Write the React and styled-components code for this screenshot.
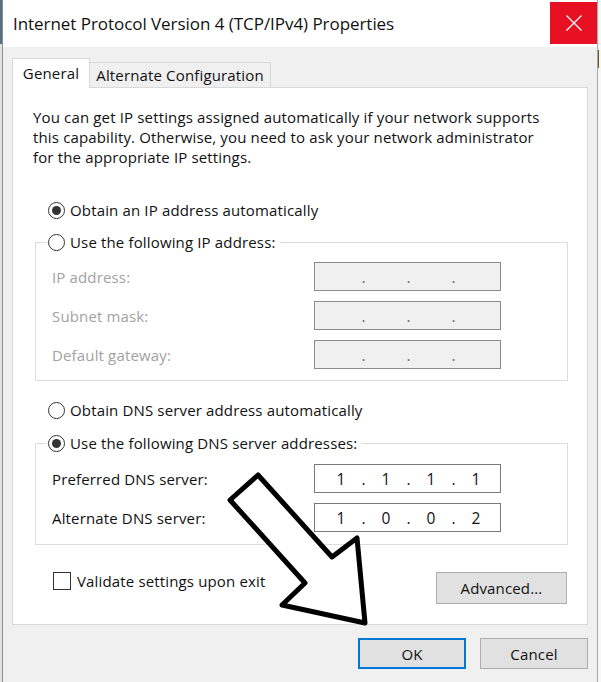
import React from "react";
import styled, { createGlobalStyle } from "styled-components";

const GlobalStyle = createGlobalStyle`
  html, body { margin: 0; padding: 0; background: #f0f0f0; }
  body { font-family: "Open Sans", "Noto Sans", "Liberation Sans", sans-serif; color: #000; }
  * { box-sizing: border-box; }
`;

const TEXT_SPACING = "0.15px";

const Screen = styled.div`
  position: relative;
  width: 601px;
  height: 682px;
  display: flex;
  overflow: hidden;
  background: #f0f0f0;
`;

const LeftEdge = styled.div`
  width: 2px;
  flex: none;
  background: linear-gradient(to bottom, #52707f 0, #52707f 44px, #e2e2e2 44px, #e2e2e2 100%);
`;

const RightEdge = styled.div`
  width: 3px;
  flex: none;
  display: flex;
  flex-direction: column;
  background: #f6f6f6;
`;

const EdgeTip = styled.div`
  margin-top: 50px;
  height: 18px;
  background: #fdf6d8;
  border-left: 1px solid #555;
`;

const Window = styled.div`
  width: 596px;
  flex: none;
  display: flex;
  flex-direction: column;
  background: #f0f0f0;
  border-left: 1px solid #8e8e8e;
  border-right: 1px solid #a8a8a8;
`;

const TitleBar = styled.div`
  height: 47px;
  flex: none;
  display: flex;
  align-items: flex-start;
  background: #fff;
`;

const Title = styled.div`
  align-self: center;
  padding-left: 10px;
  font-size: 17px;
  letter-spacing: -0.05px;
  line-height: 24px;
  color: #111;
`;

const CloseButton = styled.div`
  margin-left: auto;
  margin-top: 2px;
  width: 47px;
  height: 42px;
  background: #e81123;
  display: flex;
  align-items: center;
  justify-content: center;
`;

const Body = styled.div`
  flex: 1;
  display: flex;
  flex-direction: column;
  padding: 11px 9px 0;
`;

const TabStrip = styled.div`
  display: flex;
  align-items: flex-end;
  height: 30px;
  margin-bottom: -1px;
  position: relative;
  z-index: 1;
`;

const Tab = styled.div`
  height: ${(p) => (p.$active ? 30 : 26)}px;
  width: ${(p) => p.$w}px;
  background: ${(p) => (p.$active ? "#fff" : "#f0f0f0")};
  border-top: 1px solid #d9d9d9;
  border-right: 1px solid #d9d9d9;
  border-left: ${(p) => (p.$active ? "1px solid #d9d9d9" : "none")};
  border-bottom: ${(p) => (p.$active ? "none" : "1px solid #d9d9d9")};
  font-size: 15px;
  letter-spacing: ${TEXT_SPACING};
  display: flex;
  align-items: center;
  justify-content: center;
  padding-bottom: ${(p) => (p.$active ? 2 : 0)}px;
  color: #111;
`;

const Panel = styled.div`
  height: 538px;
  background: #fff;
  border: 1px solid #d9d9d9;
  padding: 19px 20px 0 20px;
  display: flex;
  flex-direction: column;
`;

const Description = styled.p`
  margin: 0;
  font-size: 15px;
  line-height: 20px;
  letter-spacing: ${TEXT_SPACING};
  color: #111;
  white-space: nowrap;
`;

const RadioRow = styled.label`
  display: flex;
  align-items: center;
  height: 20px;
  gap: 5px;
  margin: ${(p) => p.$top || 0}px 0 0 ${(p) => (p.$inLegend ? 0 : 15)}px;
  font-size: 15px;
  letter-spacing: ${TEXT_SPACING};
  color: #111;
`;

const RadioCircle = styled.span`
  width: 17px;
  height: 17px;
  flex: none;
  border-radius: 50%;
  border: 1px solid #333;
  background: #fff;
  display: flex;
  align-items: center;
  justify-content: center;
  &::after {
    content: "";
    width: 9px;
    height: 9px;
    border-radius: 50%;
    background: ${(p) => (p.$checked ? "#333" : "transparent")};
  }
`;

const Group = styled.fieldset`
  margin: ${(p) => p.$top}px 0 0 2px;
  width: 533px;
  min-width: 0;
  border: 1px solid #dcdcdc;
  padding: ${(p) => p.$padTop}px 0 ${(p) => p.$padBottom}px;
  display: flex;
  flex-direction: column;
  gap: 10px;
`;

const Legend = styled.legend`
  margin-left: 11px;
  padding: 0 4px 0 1px;
  height: 20px;
`;

const FieldRow = styled.div`
  display: flex;
  align-items: center;
  justify-content: space-between;
  padding: 0 66px 0 16px;
`;

const FieldLabel = styled.span`
  font-size: 15px;
  letter-spacing: ${TEXT_SPACING};
  color: ${(p) => (p.$disabled ? "#a2a2a2" : "#111")};
`;

const IpField = styled.div`
  width: 187px;
  height: 29px;
  display: flex;
  align-items: center;
  padding-left: 8px;
  border: 1px solid ${(p) => (p.$disabled ? "#8c8c8c" : "#7a7a7a")};
  background: ${(p) => (p.$disabled ? "#f0f0f0" : "#fff")};
  color: ${(p) => (p.$disabled ? "#6d6d6d" : "#111")};
  font-size: 15.5px;
`;

const Octet = styled.span`
  width: 36px;
  text-align: center;
`;

const Dot = styled.span`
  width: 9px;
  text-align: center;
`;

const BottomRow = styled.div`
  margin-top: 27px;
  display: flex;
  align-items: flex-start;
  justify-content: space-between;
`;

const CheckRow = styled.label`
  display: flex;
  align-items: center;
  gap: 6px;
  height: 18px;
  margin-left: 20px;
  font-size: 15px;
  letter-spacing: ${TEXT_SPACING};
  color: #111;
`;

const CheckBox = styled.span`
  width: 18px;
  height: 18px;
  flex: none;
  border: 1px solid #333;
  background: #fff;
`;

const Button = styled.div`
  width: ${(p) => p.$w}px;
  height: ${(p) => p.$h}px;
  display: flex;
  align-items: center;
  justify-content: center;
  background: #e1e1e1;
  border: ${(p) => (p.$default ? "2px solid #0078d7" : "1px solid #adadad")};
  font-size: 15px;
  letter-spacing: ${TEXT_SPACING};
  color: #111;
`;

const ButtonRow = styled.div`
  margin-top: 13px;
  display: flex;
  justify-content: flex-end;
  gap: 14px;
`;

const ArrowOverlay = styled.svg`
  position: absolute;
  left: 0;
  top: 0;
  pointer-events: none;
`;

function Ip({ value, disabled }) {
  const parts = value ? value.split(".") : ["", "", "", ""];
  const out = [];
  parts.forEach((p, i) => {
    out.push(<Octet key={"o" + i}>{p}</Octet>);
    if (i < 3) out.push(<Dot key={"d" + i}>.</Dot>);
  });
  return <IpField $disabled={disabled}>{out}</IpField>;
}

function Radio({ checked, children, top, inLegend }) {
  return (
    <RadioRow $top={top} $inLegend={inLegend}>
      <RadioCircle $checked={checked} />
      {children}
    </RadioRow>
  );
}

export default function App() {
  return (
    <Screen>
      <GlobalStyle />
      <LeftEdge />
      <Window>
        <TitleBar>
          <Title>Internet Protocol Version 4 (TCP/IPv4) Properties</Title>
          <CloseButton>
            <svg width="16" height="16" viewBox="0 0 16 16">
              <path d="M0.5 0.5 L15.5 15.5 M15.5 0.5 L0.5 15.5" stroke="#fff" strokeWidth="1.3" fill="none" />
            </svg>
          </CloseButton>
        </TitleBar>
        <Body>
          <TabStrip>
            <Tab $active $w={78}>General</Tab>
            <Tab $w={181}>Alternate Configuration</Tab>
          </TabStrip>
          <Panel>
            <Description>
              You can get IP settings assigned automatically if your network supports
              <br />
              this capability. Otherwise, you need to ask your network administrator
              <br />
              for the appropriate IP settings.
            </Description>
            <Radio checked top={33}>Obtain an IP address automatically</Radio>
            <Group $top={12} $padTop={10} $padBottom={11}>
              <Legend>
                <Radio inLegend>Use the following IP address:</Radio>
              </Legend>
              <FieldRow>
                <FieldLabel $disabled>IP address:</FieldLabel>
                <Ip disabled />
              </FieldRow>
              <FieldRow>
                <FieldLabel $disabled>Subnet mask:</FieldLabel>
                <Ip disabled />
              </FieldRow>
              <FieldRow>
                <FieldLabel $disabled>Default gateway:</FieldLabel>
                <Ip disabled />
              </FieldRow>
            </Group>
            <Radio top={19}>Obtain DNS server address automatically</Radio>
            <Group $top={13} $padTop={11} $padBottom={12}>
              <Legend>
                <Radio checked inLegend>Use the following DNS server addresses:</Radio>
              </Legend>
              <FieldRow>
                <FieldLabel>Preferred DNS server:</FieldLabel>
                <Ip value="1.1.1.1" />
              </FieldRow>
              <FieldRow>
                <FieldLabel>Alternate DNS server:</FieldLabel>
                <Ip value="1.0.0.2" />
              </FieldRow>
            </Group>
            <BottomRow>
              <CheckRow>
                <CheckBox />
                Validate settings upon exit
              </CheckRow>
              <Button $w={131} $h={32}>Advanced...</Button>
            </BottomRow>
          </Panel>
          <ButtonRow>
            <Button $w={108} $h={31} $default>OK</Button>
            <Button $w={108} $h={31}>Cancel</Button>
          </ButtonRow>
        </Body>
      </Window>
      <RightEdge>
        <EdgeTip />
      </RightEdge>
      <ArrowOverlay width="601" height="682" viewBox="0 0 601 682">
        <polygon
          points="230,500 258,475 332,557 357,538 365,623 282,605 305,583"
          fill="#fff"
          stroke="#000"
          strokeWidth="5"
          strokeLinejoin="round"
        />
      </ArrowOverlay>
    </Screen>
  );
}
